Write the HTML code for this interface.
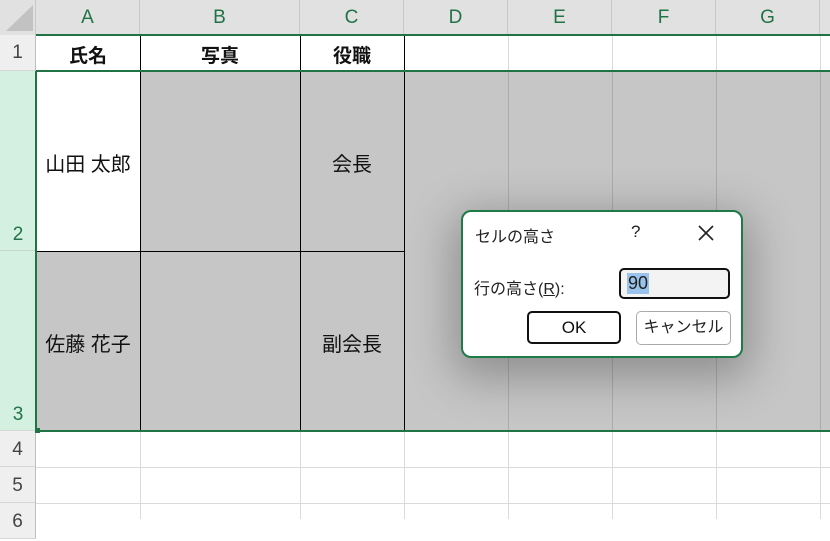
<!DOCTYPE html>
<html><head><meta charset="utf-8"><style>
*{margin:0;padding:0;box-sizing:border-box}
body{width:830px;height:519px;overflow:hidden;background:#fff;position:relative;font-family:"Liberation Sans","Noto Sans CJK JP",sans-serif}
.a{position:absolute}
.ch{top:0;height:35px;background:#e1e1e1;border-right:1px solid #c8c8c8;color:#217346;font-size:19px;text-align:center;line-height:35px}
.rh{left:0;width:36px;background:#efefef;border-bottom:1px solid #d6d6d6;border-right:1px solid #bdbdbd;color:#444;font-size:19px;text-align:center}
.vl{width:1px;background:#dadada}
.hl{height:1px;background:#dadada}
.bk{background:#000}
.t{font-size:19px;color:#111;text-align:center}
</style></head><body>
<div class="a" style="left:0;top:0;width:36px;height:35px;background:#e1e1e1;border-right:1px solid #c8c8c8"></div>
<div class="a" style="left:6px;top:5px;width:0;height:0;border-left:27px solid transparent;border-bottom:26px solid #c2c2c2"></div>
<div class="a ch" style="left:36px;width:104px">A</div>
<div class="a ch" style="left:140px;width:160px">B</div>
<div class="a ch" style="left:300px;width:104px">C</div>
<div class="a ch" style="left:404px;width:104px">D</div>
<div class="a ch" style="left:508px;width:104px">E</div>
<div class="a ch" style="left:612px;width:104px">F</div>
<div class="a ch" style="left:716px;width:104px">G</div>
<div class="a ch" style="left:820px;width:20px"></div>
<div class="a rh" style="top:35px;height:36px;line-height:36px;background:#efefef">1</div>
<div class="a rh" style="top:71px;height:180px;background:#d3f0e0;color:#217346;border-right:none;border-bottom:1px solid #c8d8cf"><span class="a" style="left:0;right:0;bottom:4px">2</span></div>
<div class="a rh" style="top:251px;height:180px;background:#d3f0e0;color:#217346;border-right:none"><span class="a" style="left:0;right:0;bottom:4px">3</span></div>
<div class="a rh" style="top:431px;height:36px;line-height:38px">4</div>
<div class="a rh" style="top:467px;height:36px;line-height:38px">5</div>
<div class="a rh" style="top:503px;height:36px;line-height:38px">6</div>
<div class="a" style="left:36px;top:71px;width:794px;height:360px;background:#c6c6c6"></div>
<div class="a" style="left:36px;top:71px;width:104px;height:180px;background:#fff"></div>
<div class="a vl" style="left:140px;top:431px;height:88px"></div>
<div class="a vl" style="left:300px;top:431px;height:88px"></div>
<div class="a vl" style="left:404px;top:431px;height:88px"></div>
<div class="a vl" style="left:508px;top:431px;height:88px"></div>
<div class="a vl" style="left:612px;top:431px;height:88px"></div>
<div class="a vl" style="left:716px;top:431px;height:88px"></div>
<div class="a vl" style="left:820px;top:431px;height:88px"></div>
<div class="a hl" style="left:36px;top:467px;width:794px"></div>
<div class="a hl" style="left:36px;top:503px;width:794px"></div>
<div class="a vl" style="left:508px;top:35px;height:36px"></div>
<div class="a vl" style="left:612px;top:35px;height:36px"></div>
<div class="a vl" style="left:716px;top:35px;height:36px"></div>
<div class="a vl" style="left:820px;top:35px;height:36px"></div>
<div class="a" style="left:508px;top:71px;width:1px;height:360px;background:#acacac"></div>
<div class="a" style="left:612px;top:71px;width:1px;height:360px;background:#acacac"></div>
<div class="a" style="left:716px;top:71px;width:1px;height:360px;background:#acacac"></div>
<div class="a" style="left:820px;top:71px;width:1px;height:360px;background:#acacac"></div>
<div class="a bk" style="left:140px;top:35px;width:1px;height:396px"></div>
<div class="a bk" style="left:300px;top:35px;width:1px;height:396px"></div>
<div class="a bk" style="left:404px;top:35px;width:1px;height:396px"></div>
<div class="a bk" style="left:36px;top:251px;width:368px;height:1px"></div>
<div class="a" style="left:36px;top:34px;width:794px;height:2px;background:#217346"></div>
<div class="a" style="left:36px;top:70px;width:794px;height:2px;background:#217346"></div>
<div class="a" style="left:36px;top:430px;width:794px;height:2px;background:#217346"></div>
<div class="a" style="left:35px;top:71px;width:2px;height:360px;background:#217346"></div>
<div class="a" style="left:35px;top:428px;width:5px;height:5px;background:#217346"></div>
<div class="a t" style="left:36px;top:41px;width:104px;font-weight:bold">氏名</div>
<div class="a t" style="left:140px;top:41px;width:160px;font-weight:bold">写真</div>
<div class="a t" style="left:300px;top:41px;width:104px;font-weight:bold">役職</div>
<div class="a t" style="left:36px;top:148px;width:104px;font-size:20px">山田 太郎</div>
<div class="a t" style="left:300px;top:148px;width:104px;font-size:20px">会長</div>
<div class="a t" style="left:36px;top:328px;width:104px;font-size:20px">佐藤 花子</div>
<div class="a t" style="left:300px;top:328px;width:104px;font-size:20px">副会長</div>
<div class="a" style="left:461px;top:210px;width:282px;height:148px;background:#fff;border:2px solid #1e7a47;border-radius:10px;box-shadow:0 12px 45px 8px rgba(0,0,0,0.28)"></div>
<div class="a" style="left:475px;top:223px;font-size:16px;color:#222">セルの高さ</div>
<div class="a" style="left:631px;top:222px;font-size:17px;color:#222">?</div>
<svg class="a" style="left:697px;top:224px" width="18" height="18"><path d="M2 2L16 16M16 2L2 16" stroke="#222" stroke-width="1.6"/></svg>
<div class="a" style="left:474px;top:275px;font-size:16px;color:#222">行の高さ(<u>R</u>):</div>
<div class="a" style="left:619px;top:268px;width:111px;height:31px;background:#f3f3f3;border:2px solid #111;border-radius:5px"></div>
<div class="a" style="left:627px;top:273px;height:21px;padding:0 1px;background:#99c3ea;font-size:18px;color:#222;line-height:21px">90</div>
<div class="a" style="left:527px;top:311px;width:94px;height:33px;border:2px solid #111;border-radius:5px;background:#fff;font-size:17px;text-align:center;line-height:29px;color:#111">OK</div>
<div class="a" style="left:636px;top:311px;width:95px;height:34px;border:1px solid #aaa;border-radius:5px;background:#fff;font-size:16px;text-align:center;line-height:32px;color:#222">キャンセル</div>
</body></html>
